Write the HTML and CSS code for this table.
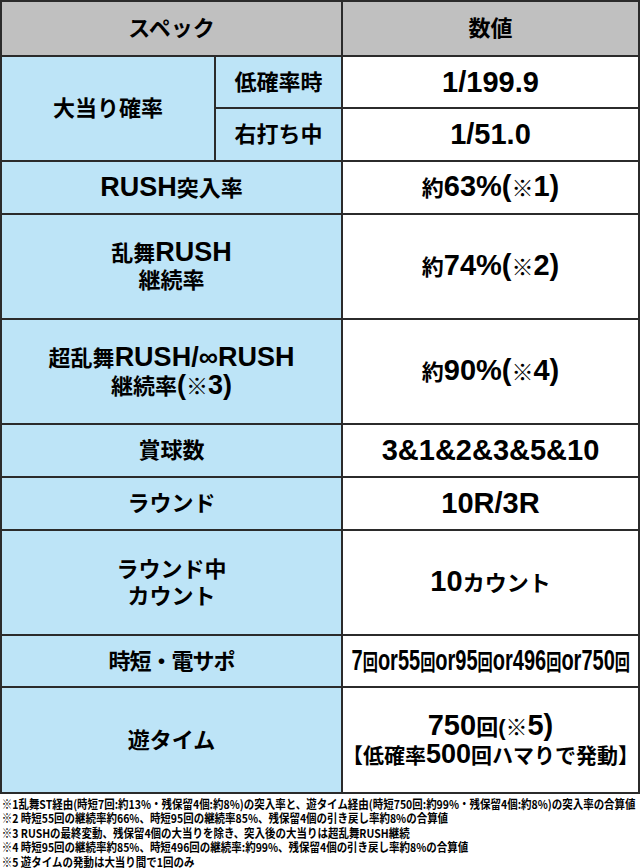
FILE: index.html
```html
<!DOCTYPE html>
<html lang="ja">
<head>
<meta charset="utf-8">
<link rel="stylesheet" href="styles.css">
</head>
<body>
<div class="spec">
  <div class="cell head wide"><div>スペック</div></div>
  <div class="cell head"><div>数値</div></div>

  <div class="cell label tall2"><div>大当り確率</div></div>
  <div class="cell label"><div>低確率時</div></div>
  <div class="cell value"><div>1/199.9</div></div>
  <div class="cell label"><div>右打ち中</div></div>
  <div class="cell value"><div>1/51.0</div></div>

  <div class="cell label wide"><div><span class="en">RUSH</span>突入率</div></div>
  <div class="cell value"><div><span class="ja">約</span>63%(<span class="ja">※</span>1)</div></div>

  <div class="cell label wide"><div>乱舞<span class="en">RUSH</span></div><div>継続率</div></div>
  <div class="cell value"><div><span class="ja">約</span>74%(<span class="ja">※</span>2)</div></div>

  <div class="cell label wide"><div>超乱舞<span class="en">RUSH/∞RUSH</span></div><div>継続率<span class="en">(</span>※<span class="en">3)</span></div></div>
  <div class="cell value"><div><span class="ja">約</span>90%(<span class="ja">※</span>4)</div></div>

  <div class="cell label wide"><div>賞球数</div></div>
  <div class="cell value"><div>3&amp;1&amp;2&amp;3&amp;5&amp;10</div></div>

  <div class="cell label wide"><div>ラウンド</div></div>
  <div class="cell value"><div>10R/3R</div></div>

  <div class="cell label wide"><div>ラウンド中</div><div>カウント</div></div>
  <div class="cell value"><div>10<span class="ja">カウント</span></div></div>

  <div class="cell label wide"><div class="tight">時短・電サポ</div></div>
  <div class="cell value"><div class="squeeze">7<span class="ja">回</span>or55<span class="ja">回</span>or95<span class="ja">回</span>or496<span class="ja">回</span>or750<span class="ja">回</span></div></div>

  <div class="cell label wide"><div>遊タイム</div></div>
  <div class="cell value"><div>750<span class="ja">回(※</span>5)</div><div class="sub"><span class="ja">【低確率</span>500<span class="ja">回ハマりで発動】</span></div></div>
</div>
<div class="notes">
  <p>※1乱舞ST経由(時短7回:約13%・残保留4個:約8%)の突入率と、遊タイム経由(時短750回:約99%・残保留4個:約8%)の突入率の合算値</p>
  <p>※2 時短55回の継続率約66%、時短95回の継続率85%、残保留4個の引き戻し率約8%の合算値</p>
  <p>※3 RUSHの最終変動、残保留4個の大当りを除き、突入後の大当りは超乱舞RUSH継続</p>
  <p>※4 時短95回の継続率約85%、時短496回の継続率:約99%、残保留4個の引き戻し率約8%の合算値</p>
  <p>※5 遊タイムの発動は大当り間で1回のみ</p>
</div>
</body>
</html>
```
FILE: styles.css
```css
html, body {
  margin: 0;
  padding: 0;
  background: #fff;
}
body {
  width: 640px;
  overflow: hidden;
  color: #000;
  font-family: "Liberation Sans", "Noto Sans CJK JP", sans-serif;
  font-weight: bold;
}
.spec {
  display: grid;
  grid-template-columns: 212px 125px 295px;
  grid-template-rows: 53px 50px 51px 51px 103px 103px 51px 51px 103px 50px 104px;
  gap: 2px;
  padding: 2px;
  background: #2b2b2b;
  width: 640px;
  box-sizing: border-box;
}
.cell {
  display: flex;
  flex-direction: column;
  align-items: center;
  justify-content: center;
  text-align: center;
  line-height: 27px;
  white-space: nowrap;
  min-width: 0;
}
.wide {
  grid-column: span 2;
}
.tall2 {
  grid-row: span 2;
}
.head {
  background: #c0c0c0;
  font-size: 22px;
}
.label {
  background: #bde4f7;
  font-size: 22px;
}
.label .en {
  font-size: 27px;
}
.tight {
  letter-spacing: -1px;
}
.value {
  background: #fff;
  font-size: 29px;
}
.value .ja {
  font-size: 22px;
}
.value .sub {
  font-size: 27px;
}
.value .sub .ja {
  font-size: 21px;
}
.squeeze {
  transform: scaleX(0.69);
}
.notes {
  padding: 3px 0 0 2px;
  font-family: "Noto Sans CJK JP", sans-serif;
  font-size: 12px;
  line-height: 14.4px;
  transform: scaleX(0.873);
  transform-origin: left top;
  white-space: nowrap;
}
.notes p {
  margin: 0;
}
```
